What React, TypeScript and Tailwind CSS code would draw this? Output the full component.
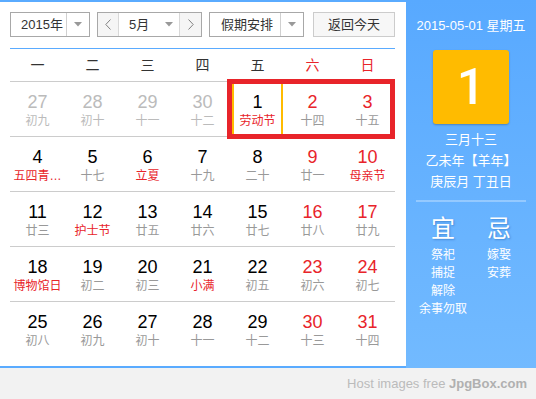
import React from "react";

type Day = { n: number; l: string; prev?: boolean; fest?: boolean };

const rows: Day[][] = [
  [
    { n: 27, l: "初九", prev: true },
    { n: 28, l: "初十", prev: true },
    { n: 29, l: "十一", prev: true },
    { n: 30, l: "十二", prev: true },
    { n: 1, l: "劳动节", fest: true },
    { n: 2, l: "十四" },
    { n: 3, l: "十五" },
  ],
  [
    { n: 4, l: "五四青…", fest: true },
    { n: 5, l: "十七" },
    { n: 6, l: "立夏", fest: true },
    { n: 7, l: "十九" },
    { n: 8, l: "二十" },
    { n: 9, l: "廿一" },
    { n: 10, l: "母亲节", fest: true },
  ],
  [
    { n: 11, l: "廿三" },
    { n: 12, l: "护士节", fest: true },
    { n: 13, l: "廿五" },
    { n: 14, l: "廿六" },
    { n: 15, l: "廿七" },
    { n: 16, l: "廿八" },
    { n: 17, l: "廿九" },
  ],
  [
    { n: 18, l: "博物馆日", fest: true },
    { n: 19, l: "初二" },
    { n: 20, l: "初三" },
    { n: 21, l: "小满", fest: true },
    { n: 22, l: "初五" },
    { n: 23, l: "初六" },
    { n: 24, l: "初七" },
  ],
  [
    { n: 25, l: "初八" },
    { n: 26, l: "初九" },
    { n: 27, l: "初十" },
    { n: 28, l: "十一" },
    { n: 29, l: "十二" },
    { n: 30, l: "十三" },
    { n: 31, l: "十四" },
  ],
];

const weekdays = ["一", "二", "三", "四", "五", "六", "日"];

function Arrow() {
  return (
    <svg width="8" height="5" viewBox="0 0 8 5">
      <polygon points="0,0 8,0 4,4.5" fill="#999999" />
    </svg>
  );
}

function Chevron({ dir }: { dir: "l" | "r" }) {
  return (
    <svg width="6" height="11" viewBox="0 0 6 11">
      <polyline
        points={dir === "l" ? "5.5,0.5 0.8,5.5 5.5,10.5" : "0.5,0.5 5.2,5.5 0.5,10.5"}
        fill="none"
        stroke="#808080"
        strokeWidth="1"
      />
    </svg>
  );
}

function Cell({ d, col }: { d: Day; col: number }) {
  const weekend = col >= 5;
  const numColor = d.prev ? "text-[#bbbbbb]" : weekend ? "text-[#e8242a]" : "text-[#000000]";
  const lunarColor = d.prev ? "text-[#bbbbbb]" : d.fest ? "text-[#e8242a]" : "text-[#999999]";
  const selected = d.n === 1 && !d.prev;
  return (
    <div className={`flex flex-col items-center pt-[10px] ${selected ? "mx-[2px] border-x-2 border-[#ffbb00]" : ""}`}>
      <div className={`text-[18px] leading-[20px] font-['Liberation_Sans',sans-serif] ${numColor}`}>{d.n}</div>
      <div className={`text-[12px] leading-[18px] whitespace-nowrap ${lunarColor}`}>{d.l}</div>
    </div>
  );
}

export default function App() {
  return (
    <div className="w-[536px] h-[399px] flex flex-col bg-[#f2f2f2] font-['Liberation_Sans','Noto_Sans_CJK_SC',sans-serif]">
      <div className="flex h-[368px]">
        {/* main calendar */}
        <div className="w-[406px] bg-white border-t-2 border-b-2 border-[#5aabff] pl-[10px] pr-[11px] flex flex-col">
          {/* controls */}
          <div className="mt-[10px] h-[25px] flex text-[13px] text-[#333]">
            <div className="w-[80px] h-[25px] flex border border-[#a8a8a8] bg-white">
              <div className="w-[55px] pl-[10px] flex items-center">2015年</div>
              <div className="flex-1 border-l border-[#d0d0d0] flex items-center justify-center">
                <Arrow />
              </div>
            </div>
            <div className="ml-[7px] w-[105px] h-[25px] flex border border-[#a8a8a8] bg-white">
              <div className="w-[21px] bg-[#f5f5f5] border-r border-[#d8d8d8] flex items-center justify-center">
                <Chevron dir="l" />
              </div>
              <div className="flex-1 flex items-center pl-[10px] pr-[6px] justify-between">
                <span>5月</span>
                <Arrow />
              </div>
              <div className="w-[22px] bg-[#f5f5f5] border-l border-[#d8d8d8] flex items-center justify-center">
                <Chevron dir="r" />
              </div>
            </div>
            <div className="ml-[7px] w-[95px] h-[25px] flex border border-[#a8a8a8] bg-white">
              <div className="w-[70px] pl-[11px] flex items-center">假期安排</div>
              <div className="flex-1 border-l border-[#d0d0d0] flex items-center justify-center">
                <Arrow />
              </div>
            </div>
            <div className="ml-[9px] w-[82px] h-[25px] border border-[#cccccc] bg-[#f7f7f7] flex items-center justify-center">
              返回今天
            </div>
          </div>
          {/* blue line */}
          <div className="mt-[11px] h-px bg-[#5aabff]" />
          {/* weekday header */}
          <div className="h-[33px] grid grid-cols-7 border-b border-[#cccccc] text-[14px]">
            {weekdays.map((w, i) => (
              <div
                key={w}
                className={`flex items-center justify-center ${i >= 5 ? "text-[#e8242a]" : "text-[#333]"}`}
              >
                {w}
              </div>
            ))}
          </div>
          {rows.map((r, ri) => (
            <div
              key={ri}
              className={`relative grid grid-cols-7 ${ri < 4 ? "h-[55px] border-b border-[#cccccc]" : "flex-1"}`}
            >
              {r.map((d, ci) => (
                <Cell key={ci} d={d} col={ci} />
              ))}
              {ri === 0 && (
                <div className="absolute left-[217px] top-[-3px] w-[168px] h-[60px] border-[5px] border-[#e8242a] pointer-events-none" />
              )}
            </div>
          ))}
        </div>
        {/* right panel */}
        <div className="flex-1 bg-gradient-to-b from-[#58a9ff] to-[#72baff] flex flex-col items-center text-white">
          <div className="mt-[18px] text-[13px] leading-[16px] whitespace-nowrap">2015-05-01 星期五</div>
          <div className="mt-[16px] w-[76px] h-[74px] rounded-[3px] bg-[#ffbb00] shadow-[0_1px_2px_rgba(0,0,0,0.25)] flex items-center justify-center">
            <span className="text-[50px] leading-none font-medium font-['Roboto',sans-serif]">1</span>
          </div>
          <div className="mt-[5px] text-[13px] leading-[21px] flex flex-col items-center whitespace-nowrap">
            <div>三月十三</div>
            <div>乙未年【羊年】</div>
            <div>庚辰月 丁丑日</div>
          </div>
          <div className="mt-[8px] w-[110px] h-[2px] bg-white/30" />
          <div className="mt-[13px] w-[112px] grid grid-cols-[56px_56px]">
            <div className="flex flex-col items-center">
              <div className="text-[24px] leading-[28px] [text-shadow:1px_1px_2px_rgba(0,60,140,0.35)]">宜</div>
              <div className="mt-[3px] text-[12px] leading-[18px] flex flex-col items-center whitespace-nowrap">
                <div>祭祀</div>
                <div>捕捉</div>
                <div>解除</div>
                <div>余事勿取</div>
              </div>
            </div>
            <div className="flex flex-col items-center">
              <div className="text-[24px] leading-[28px] [text-shadow:1px_1px_2px_rgba(0,60,140,0.35)]">忌</div>
              <div className="mt-[3px] text-[12px] leading-[18px] flex flex-col items-center whitespace-nowrap">
                <div>嫁娶</div>
                <div>安葬</div>
              </div>
            </div>
          </div>
        </div>
      </div>
      <div className="flex-1 flex items-center justify-end pr-[9px] text-[13px] text-[#bbbbbb] font-['Liberation_Sans',sans-serif]">
        <span>
          Host images free <b className="text-[#b0b0b0]">JpgBox.com</b>
        </span>
      </div>
    </div>
  );
}
